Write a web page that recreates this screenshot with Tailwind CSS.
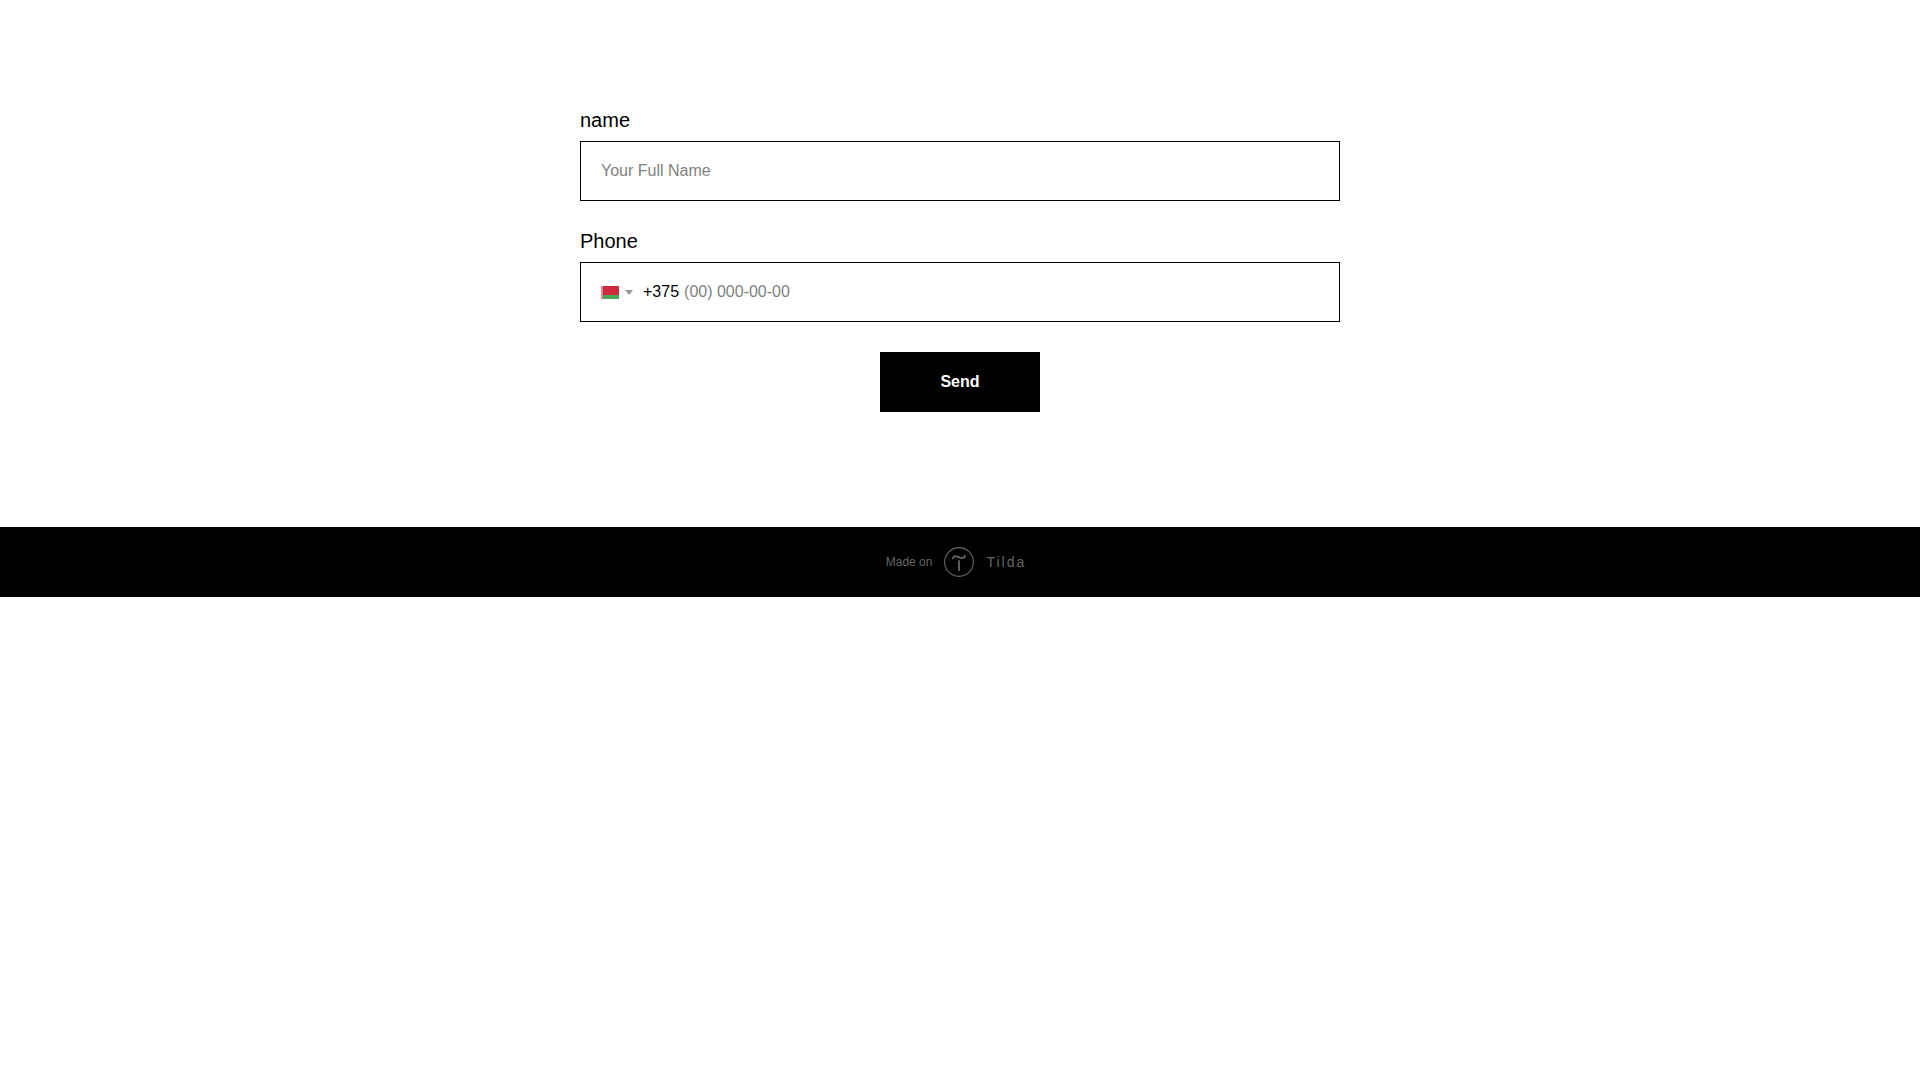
<!DOCTYPE html>
<html lang="en">
<head>
<meta charset="utf-8">
<meta name="viewport" content="width=device-width, initial-scale=1">
<title>Contact form</title>
<script src="https://cdn.jsdelivr.net/npm/@tailwindcss/browser@4"></script>
</head>
<body class="bg-white font-[Arial,'Liberation_Sans',sans-serif] text-black antialiased">
<main class="px-5 pt-[105px] pb-[115px]">
  <form class="mx-auto flex max-w-[760px] flex-col gap-[25px]">
    <div>
      <label for="name" class="block pb-[5px] text-xl leading-[31px]">name</label>
      <input id="name" type="text" placeholder="Your Full Name" class="block h-[60px] w-full rounded-none border border-black px-5 text-base placeholder:text-[#7f7f7f]">
    </div>
    <div>
      <label for="phone" class="block pb-[5px] text-xl leading-[31px]">Phone</label>
      <div class="flex h-[60px] items-center border border-black px-5 text-base">
        <button type="button" aria-label="Country code" class="flex items-center gap-1.5 pr-2.5">
          <svg class="h-[13px] w-[18px]" viewBox="0 0 18 13" shape-rendering="crispEdges">
            <path fill="#cb2b3e" d="M0 0h18v9H0z"/>
            <path fill="#4aa657" d="M0 9h18v4H0z"/>
            <path fill="#e98b96" d="M0 0h2v13H0z"/>
            <path fill="#dc6372" d="M0 1h1v1H0zM1 3h1v1H1zM0 5h1v1H0zM1 7h1v1H1zM0 9h1v1H0zM1 11h1v1H1z"/>
          </svg>
          <svg class="h-[5px] w-2" viewBox="0 0 8 5"><path fill="#999" d="M0 0h8L4 5z"/></svg>
        </button>
        <span>+375</span>
        <input id="phone" type="tel" placeholder="(00) 000-00-00" class="ml-[5px] min-w-0 flex-1 placeholder:text-[#7f7f7f]">
      </div>
    </div>
    <div class="flex justify-center pt-[5px]">
      <button type="submit" class="h-[60px] w-40 bg-black text-base font-bold text-white">Send</button>
    </div>
  </form>
</main>
<footer class="flex h-[70px] items-center justify-center bg-black pr-2 text-[#666]">
  <a href="#" class="flex items-center gap-3">
    <span class="text-xs">Made on</span>
    <svg class="size-[30px]" viewBox="0 0 30 30" fill="none" stroke="currentColor">
      <circle cx="15" cy="15" r="14.4" stroke-width="1.1"/>
      <path stroke-width="1.8" d="M8.7 12.2C9 9.7 10.6 8.7 12.6 9.3C14.5 9.9 15.6 11.1 17.7 11.1C19.7 11.1 20.9 10.3 21.1 8.2M15 13.3V24"/>
    </svg>
    <span class="text-sm tracking-[2px]">Tilda</span>
  </a>
</footer>
</body>
</html>
